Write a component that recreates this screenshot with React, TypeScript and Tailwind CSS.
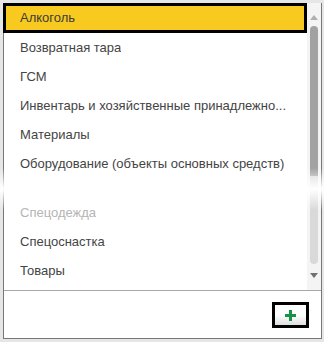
const items = [
  "Возвратная тара",
  "ГСМ",
  "Инвентарь и хозяйственные принадлежно...",
  "Материалы",
  "Оборудование (объекты основных средств)",
];

const tail = ["Спецоснастка", "Товары"];

function Row({ label, faded = false }: { label: string; faded?: boolean }) {
  return (
    <div className={`flex h-[29px] items-center pl-4 ${faded ? "text-[#b4b4b4]" : "text-[#444]"}`}>
      <span className="truncate">{label}</span>
    </div>
  );
}

function Scrollbar() {
  return (
    <div className="flex w-[14px] shrink-0 flex-col items-center bg-[#f4f4f4] pt-[12px]">
      <div className="h-0 w-0 border-x-[4px] border-b-[5px] border-x-transparent border-b-[#b0b0b0]" />
      <div className="mt-[6px] flex w-[8px] flex-col overflow-hidden rounded-full">
        <div className="h-[150px] bg-[#a2a2a2]" />
        <div className="h-[88px] bg-[#d9d9d9]" />
      </div>
      <div className="mt-[9px] h-0 w-0 border-x-[4px] border-t-[5px] border-x-transparent border-t-[#707070]" />
    </div>
  );
}

export default function App() {
  return (
    <div
      className="relative h-[342px] w-[324px] bg-[#e6e6e6] pl-[3px] pt-[3px] text-[13px]"
      style={{ fontFamily: '"Liberation Sans", Arial, sans-serif' }}
    >
      <div className="flex h-[336px] w-[319px] flex-col border border-[#777] border-t-0 bg-white">
        <div className="flex h-[287px]">
          <div className="min-w-0 flex-1">
            <div className="-ml-px flex h-[30px] items-center border-[3px] border-black bg-[#f8c91f] pl-[14px] text-[#3c3c3c]">
              Алкоголь
            </div>
            {items.map((it) => (
              <Row key={it} label={it} />
            ))}
            <div className="h-[20px]" />
            <Row label="Спецодежда" faded />
            {tail.map((it) => (
              <Row key={it} label={it} />
            ))}
          </div>
          <Scrollbar />
        </div>
        <div className="h-px bg-[#a8a8a8]" />
        <div className="flex flex-1 justify-end pr-[12px] pt-[11px]">
          <button className="flex h-[26px] w-[37px] items-center justify-center border-[3px] border-black bg-gradient-to-b from-white via-white to-[#dedede]">
            <svg width="11" height="11" viewBox="0 0 11 11">
              <rect x="4" y="0" width="3" height="11" fill="#159447" />
              <rect x="0" y="4" width="11" height="3" fill="#159447" />
            </svg>
          </button>
        </div>
      </div>
      {/* fading band over the list */}
      <div className="pointer-events-none absolute left-0 top-[168px] h-[42px] w-full bg-gradient-to-b from-transparent via-white to-transparent" />
    </div>
  );
}
